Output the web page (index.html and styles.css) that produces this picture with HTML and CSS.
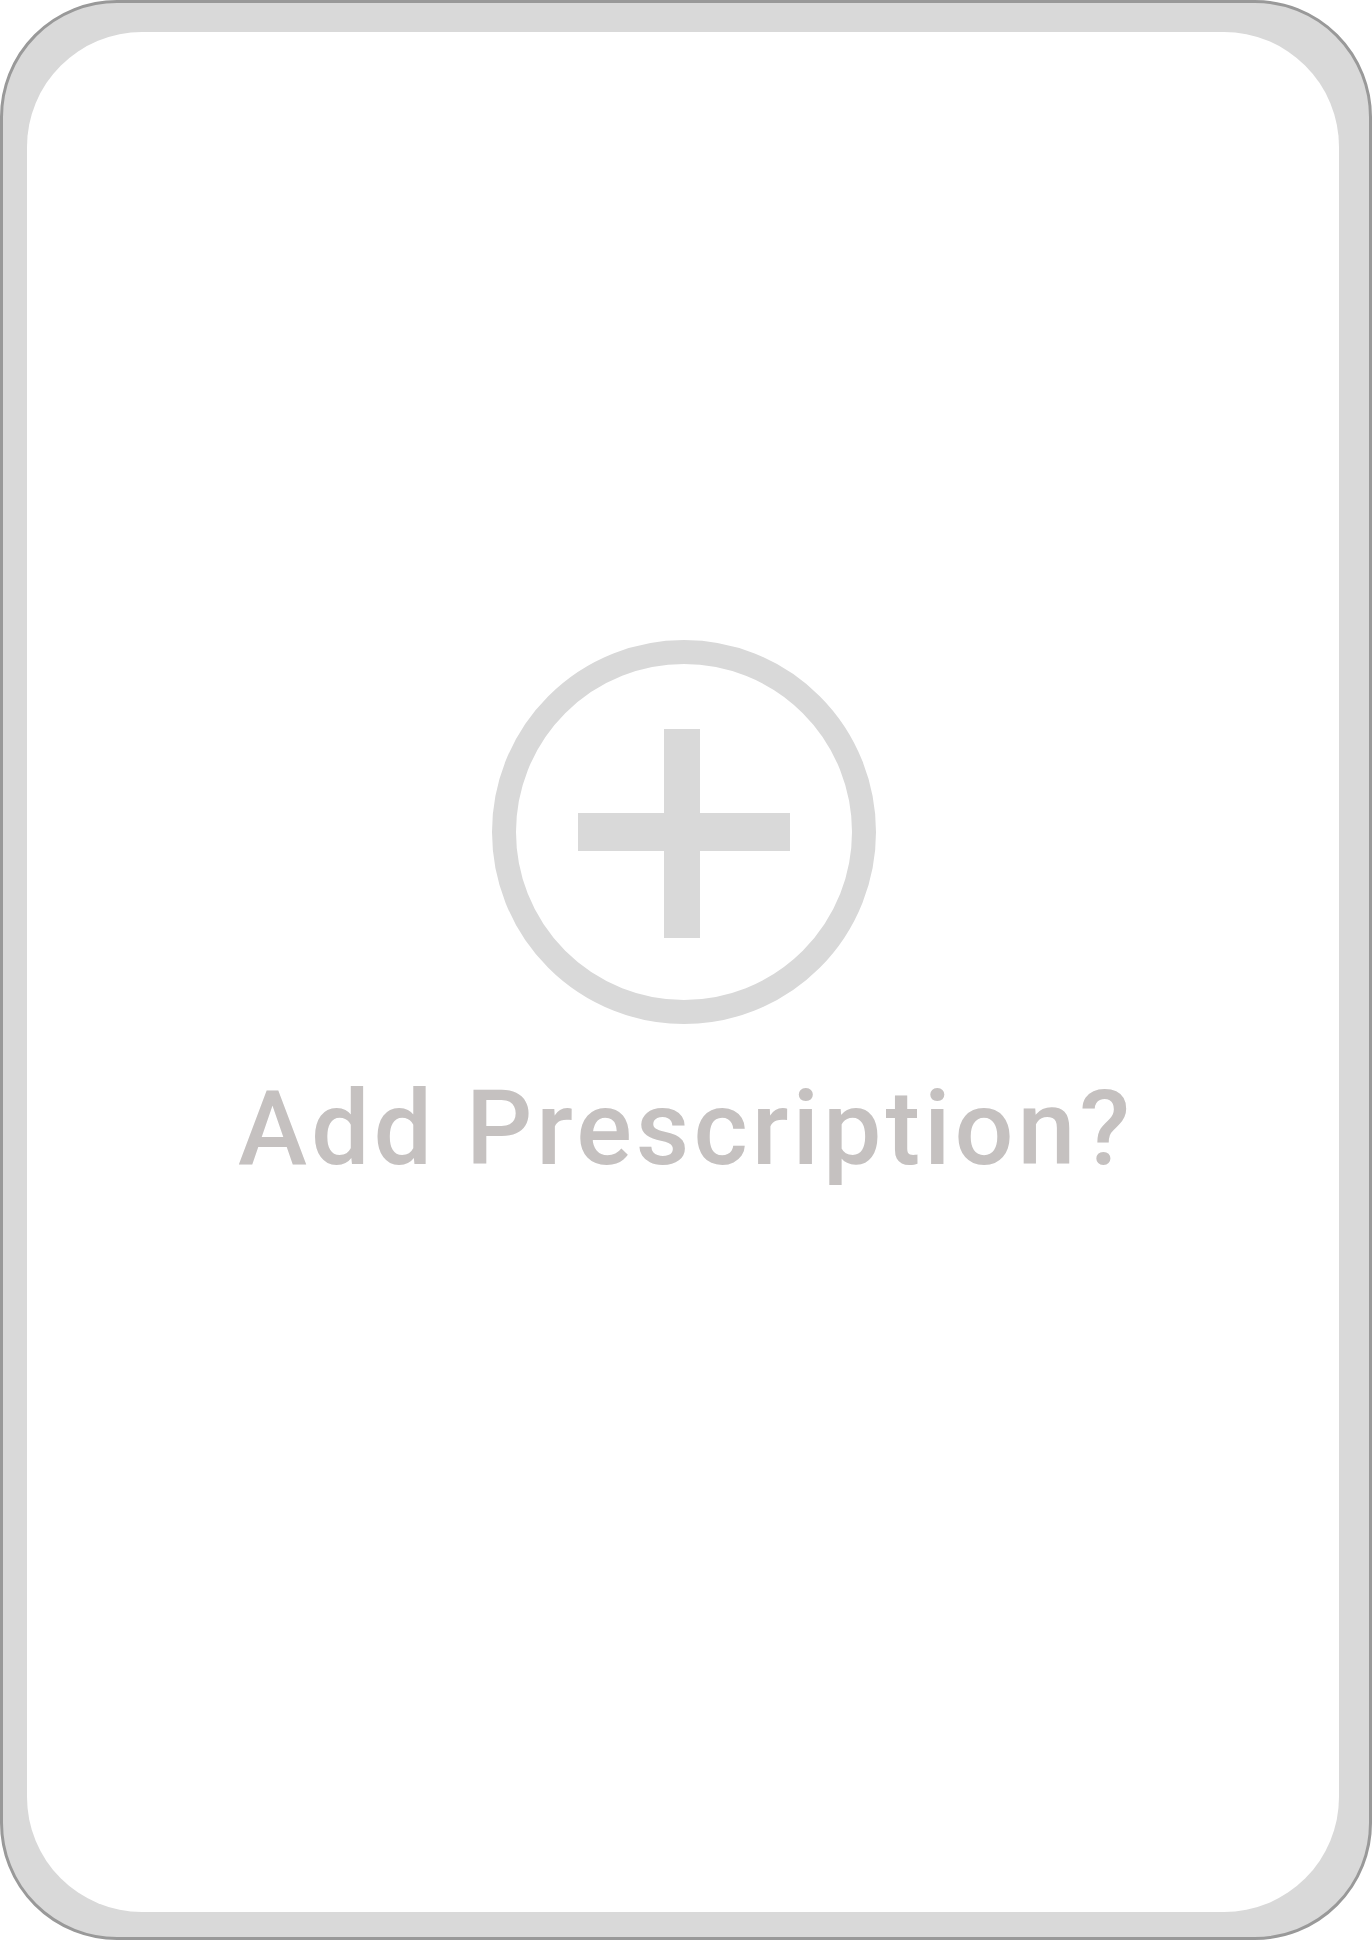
FILE: index.html
```html
<!DOCTYPE html>
<html lang="en">
<head>
<meta charset="utf-8">
<title>Add Prescription</title>
<link rel="stylesheet" href="styles.css">
</head>
<body>
<div class="frame">
  <div class="panel">
    <svg class="add-icon" width="384" height="384" viewBox="0 0 384 384" aria-hidden="true">
      <circle cx="192" cy="192" r="180" fill="none" stroke="#d9d9d9" stroke-width="24"/>
      <rect x="172" y="89" width="36" height="209" fill="#d9d9d9"/>
      <rect x="86" y="173" width="212" height="38" fill="#d9d9d9"/>
    </svg>
    <div class="label">Add Prescription?</div>
  </div>
</div>
</body>
</html>
```
FILE: styles.css
```css
html, body {
  margin: 0;
  padding: 0;
  background: #ffffff;
}
.frame {
  box-sizing: border-box;
  width: 1372px;
  height: 1940px;
  border: 3px solid #999999;
  border-radius: 117px;
  background: #d9d9d9;
  padding: 29px 30px 25px 24px;
}
.panel {
  box-sizing: border-box;
  height: 100%;
  background: #ffffff;
  border-radius: 115px;
  display: flex;
  flex-direction: column;
  align-items: center;
  padding-top: 608px;
}
.add-icon {
  display: block;
  margin-left: 2px;
}
.label {
  margin-top: 55px;
  padding-left: 6px;
  font-family: Roboto, "Noto Sans", sans-serif;
  font-weight: 500;
  font-size: 104px;
  line-height: 100px;
  letter-spacing: 4px;
  color: #c5c1c0;
  white-space: nowrap;
}
```
